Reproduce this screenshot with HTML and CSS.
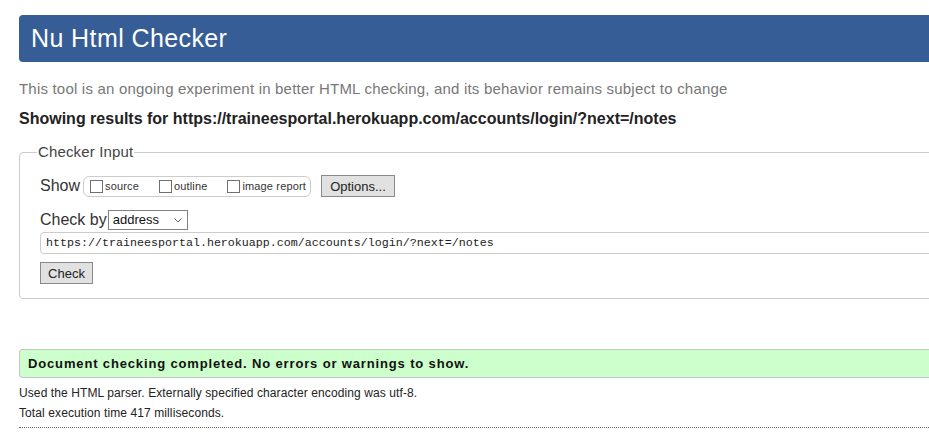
FILE: index.html
```html
<!DOCTYPE html>
<html lang="en">
<head>
<meta charset="utf-8">
<title>Nu Html Checker</title>
<link rel="stylesheet" href="styles.css">
</head>
<body>
<div class="page">
  <h1 class="banner"><span>Nu Html Checker</span></h1>
  <p class="intro">This tool is an ongoing experiment in better HTML checking, and its behavior remains subject to change</p>
  <p class="results">Showing results for https://traineesportal.herokuapp.com/accounts/login/?next=/notes</p>

  <fieldset class="checker">
    <legend>Checker Input</legend>
    <div class="row show-row">
      <span class="label">Show</span>
      <div class="opts">
        <label class="opt"><input type="checkbox" class="box"><span>source</span></label>
        <label class="opt"><input type="checkbox" class="box"><span>outline</span></label>
        <label class="opt"><input type="checkbox" class="box"><span>image report</span></label>
      </div>
      <button class="btn opt-btn" type="button">Options...</button>
    </div>
    <div class="row by-row">
      <span class="label">Check by</span>
      <span class="select-wrap">
        <select class="select"><option>address</option></select>
        <svg class="chev" width="8" height="5" viewBox="0 0 8 5"><path d="M0.5 0.5 L4 4 L7.5 0.5" fill="none" stroke="#666" stroke-width="1"/></svg>
      </span>
    </div>
    <input class="url" type="text" value="https://traineesportal.herokuapp.com/accounts/login/?next=/notes">
    <button class="btn check-btn" type="submit">Check</button>
  </fieldset>

  <p class="success">Document checking completed. No errors or warnings to show.</p>
  <p class="meta">Used the HTML parser. Externally specified character encoding was utf-8.</p>
  <p class="meta">Total execution time 417 milliseconds.</p>
  <hr class="dots">
</div>
</body>
</html>
```
FILE: styles.css
```css
html, body {
  margin: 0;
  padding: 0;
  background: #fff;
  overflow-x: hidden;
}
body {
  font-family: "Liberation Sans", Arial, sans-serif;
  color: #222;
}
.page {
  padding: 15px 0 0 19px;
  margin-right: -40px;
}
.banner {
  margin: 0;
  height: 47px;
  display: flex;
  align-items: center;
  background: #365d95;
  border-radius: 4px 0 0 4px;
  color: #fff;
  font-weight: normal;
  font-size: 25px;
  letter-spacing: 0.4px;
  padding-left: 12px;
}
.intro {
  margin: 18px 0 0;
  font-size: 15px;
  line-height: 18px;
  color: #777;
  letter-spacing: 0.2px;
}
.results {
  margin: 12px 0 0;
  font-size: 16px;
  line-height: 18px;
  font-weight: bold;
  color: #222;
}
.checker {
  margin: 15px 0 0;
  border: 1px solid #ccc;
  border-radius: 4px 0 0 4px;
  padding: 0 20px 14px 20px;
  min-width: 0;
}
.checker legend {
  font-size: 15px;
  line-height: 18px;
  color: #444;
  padding: 0 1px;
  margin-left: -3px;
  letter-spacing: 0.15px;
}
.row {
  display: flex;
  align-items: center;
}
.label {
  font-size: 16px;
  color: #333;
}
.show-row {
  margin-top: 14px;
  height: 22px;
}
.opts {
  display: flex;
  align-items: center;
  margin-left: 3px;
  height: 19px;
  border: 1px solid #ccc;
  border-radius: 6px;
  padding: 0 4px 0 6px;
}
.opt {
  display: flex;
  align-items: center;
  font-size: 11px;
  letter-spacing: 0.15px;
  color: #333;
  margin-right: 20px;
}
.opt:last-child {
  margin-right: 0;
}
.box {
  appearance: none;
  -webkit-appearance: none;
  margin: 0 2px 0 0;
  width: 13px;
  height: 13px;
  border: 1px solid #707070;
  background: #fff;
  border-radius: 0;
}
.btn {
  font-family: "Liberation Sans", Arial, sans-serif;
  font-size: 13px;
  color: #222;
  background: #e1e1e1;
  border: 1px solid #8a8a8a;
  border-radius: 0;
  padding: 0 8px;
  height: 22px;
}
.opt-btn {
  margin-left: 10px;
  width: 74px;
}
.by-row {
  margin-top: 12px;
  height: 21px;
}
.select-wrap {
  position: relative;
  margin-left: 1px;
  display: inline-block;
}
.select {
  appearance: none;
  -webkit-appearance: none;
  width: 80px;
  height: 20px;
  border: 1px solid #828282;
  border-radius: 0;
  background: #fff;
  font-family: "Liberation Sans", Arial, sans-serif;
  font-size: 13px;
  color: #111;
  padding: 0 0 0 4px;
  display: block;
}
.chev {
  position: absolute;
  right: 6px;
  top: 8px;
  pointer-events: none;
}
.url {
  display: block;
  box-sizing: border-box;
  margin-top: 2px;
  width: 100%;
  height: 22px;
  border: 1px solid #ccc;
  border-radius: 4px 0 0 4px;
  padding: 0 0 0 5px;
  font-family: "Liberation Mono", "Courier New", monospace;
  font-size: 11.67px;
  color: #222;
  outline: none;
}
.check-btn {
  display: block;
  margin-top: 8px;
  width: 53px;
  padding: 0;
}
.success {
  margin: 50px 0 0;
  height: 27px;
  line-height: 27px;
  background: #ccffcc;
  border: 1px solid #c6c6c6;
  border-right: 0;
  border-radius: 4px 0 0 4px;
  padding-left: 8px;
  font-size: 13px;
  font-weight: bold;
  color: #111;
  letter-spacing: 0.85px;
}
.meta {
  margin: 0;
  font-size: 12px;
  line-height: 20px;
  color: #222;
  letter-spacing: 0.1px;
}
.success + .meta {
  margin-top: 5px;
}
.dots {
  margin: 4px 0 0;
  border: 0;
  border-top: 1px dotted #666;
  height: 0;
}
```
